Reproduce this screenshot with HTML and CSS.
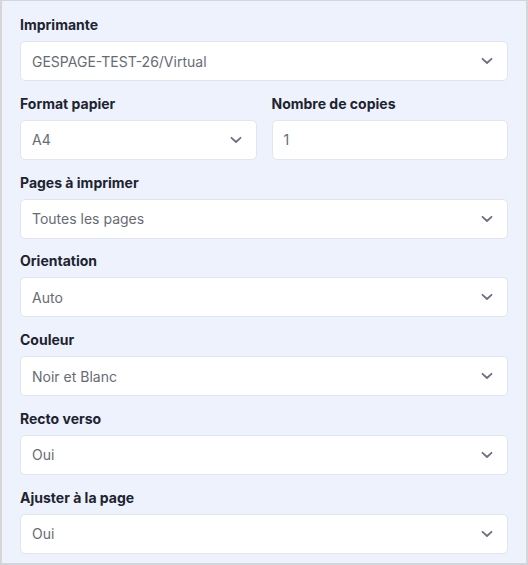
FILE: index.html
```html
<!DOCTYPE html>
<html lang="fr">
<head>
<meta charset="utf-8">
<link rel="stylesheet" href="styles.css">
</head>
<body>
<div class="panel">
  <div class="field">
    <div class="label">Imprimante</div>
    <div class="control select"><span>GESPAGE-TEST-26/Virtual</span><svg class="chev" viewBox="0 0 12 8"><path d="M1.5 1.8 6 6 10.5 1.8"/></svg></div>
  </div>
  <div class="row">
    <div class="field">
      <div class="label">Format papier</div>
      <div class="control select"><span>A4</span><svg class="chev" viewBox="0 0 12 8"><path d="M1.5 1.8 6 6 10.5 1.8"/></svg></div>
    </div>
    <div class="field">
      <div class="label">Nombre de copies</div>
      <div class="control"><span>1</span></div>
    </div>
  </div>
  <div class="field">
    <div class="label">Pages à imprimer</div>
    <div class="control select"><span>Toutes les pages</span><svg class="chev" viewBox="0 0 12 8"><path d="M1.5 1.8 6 6 10.5 1.8"/></svg></div>
  </div>
  <div class="field">
    <div class="label">Orientation</div>
    <div class="control select"><span>Auto</span><svg class="chev" viewBox="0 0 12 8"><path d="M1.5 1.8 6 6 10.5 1.8"/></svg></div>
  </div>
  <div class="field">
    <div class="label">Couleur</div>
    <div class="control select"><span>Noir et Blanc</span><svg class="chev" viewBox="0 0 12 8"><path d="M1.5 1.8 6 6 10.5 1.8"/></svg></div>
  </div>
  <div class="field">
    <div class="label">Recto verso</div>
    <div class="control select"><span>Oui</span><svg class="chev" viewBox="0 0 12 8"><path d="M1.5 1.8 6 6 10.5 1.8"/></svg></div>
  </div>
  <div class="field">
    <div class="label">Ajuster à la page</div>
    <div class="control select"><span>Oui</span><svg class="chev" viewBox="0 0 12 8"><path d="M1.5 1.8 6 6 10.5 1.8"/></svg></div>
  </div>
</div>
</body>
</html>
```
FILE: styles.css
```css
html, body {
  margin: 0;
  padding: 0;
  background: #ffffff;
}
.panel {
  box-sizing: border-box;
  width: 528px;
  height: 565px;
  background: #edf2fd;
  border: 2px solid #d5d6d9;
  border-top-width: 1px;
  padding: 16px 18px 0 18px;
  display: flex;
  flex-direction: column;
  gap: 14.8px;
  font-family: Inter, "Noto Sans", sans-serif;
}
.row {
  display: grid;
  grid-template-columns: 1fr 1fr;
  gap: 15px;
}
.field {
  display: flex;
  flex-direction: column;
  gap: 8px;
}
.label {
  font-size: 14px;
  line-height: 16px;
  font-weight: 700;
  color: #1e2330;
  letter-spacing: 0px;
}
.control {
  box-sizing: border-box;
  height: 40px;
  background: #ffffff;
  border: 1px solid #e1e5ee;
  border-radius: 5px;
  display: flex;
  align-items: center;
  justify-content: space-between;
  padding: 0 14px 0 11px;
  font-size: 14px;
  color: #676b74;
}
.chev {
  width: 12px;
  height: 8px;
  fill: none;
  stroke: #6b7080;
  stroke-width: 1.8;
  stroke-linecap: round;
  stroke-linejoin: round;
}
```
